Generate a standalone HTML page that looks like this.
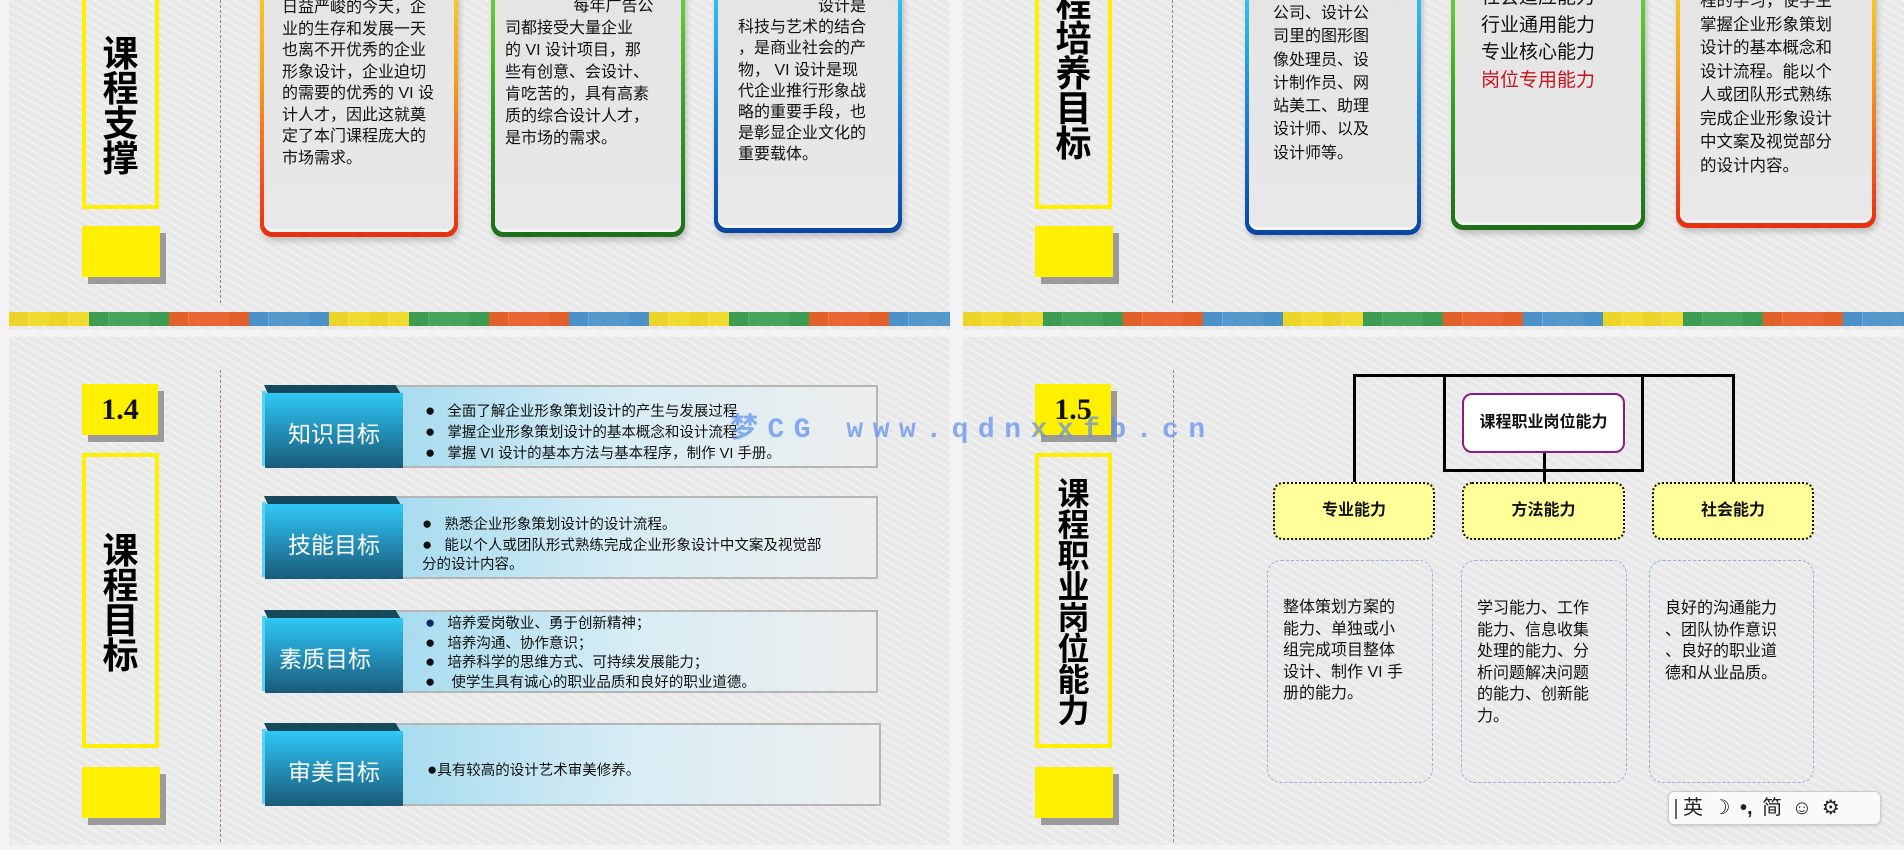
<!DOCTYPE html>
<html><head><meta charset="utf-8">
<style>
*{margin:0;padding:0;box-sizing:border-box}
body{width:1904px;height:850px;background:#f3f3f5;position:relative;overflow:hidden;font-family:"Liberation Sans","Noto Sans CJK SC",sans-serif;color:#111}
.a{position:absolute}
.panel{position:absolute;overflow:hidden;background-color:#eaeaea;background-image:repeating-linear-gradient(30deg,#e8e8e8 0px,#e8e8e8 5px,#f1f1f1 5px,#f1f1f1 7px)}
.tbox{position:absolute;border:4px solid #fff000;width:77px}
.tt{position:absolute;left:0;width:100%;text-align:center;font-size:36px;line-height:35px;color:#000;font-weight:bold;font-family:"Liberation Sans","Noto Sans CJK SC",sans-serif}
.ysq{position:absolute;width:78px;height:51px;background:#fff000;box-shadow:6px 7px 0 #9a9a9a}
.dash{position:absolute;width:0;border-left:1px dashed #b07a90}
.strip{position:absolute;left:0;height:14px;width:960px;background:repeating-linear-gradient(90deg,#ecd428 0,#ecd428 19px,#f6e650 19px,#f6e650 20px,#f0dc30 20px,#f0dc30 40px,#ecd428 40px,#ecd428 59px,#f6e650 59px,#f6e650 60px,#f0dc30 60px,#f0dc30 80px,#3c9c52 80px,#3c9c52 99px,#52b068 99px,#52b068 100px,#44a45a 100px,#44a45a 140px,#3c9c52 140px,#3c9c52 160px,#e2602a 160px,#e2602a 179px,#f07a48 179px,#f07a48 180px,#e86634 180px,#e86634 220px,#e2602a 220px,#e2602a 240px,#4c92c8 240px,#4c92c8 259px,#6aaade 259px,#6aaade 260px,#5498cc 260px,#5498cc 300px,#4c92c8 300px,#4c92c8 320px)}
.card{position:absolute;border-radius:12px;padding:0 4px 5px 4px;box-shadow:2px 4px 6px rgba(0,0,0,.18)}
.card .in{width:100%;height:100%;background:linear-gradient(#e4e4e4,#e8e8e8);border-radius:9px;box-shadow:inset 0 -3px 0 #f4f4f4}
.txt{position:absolute;font-size:16px;line-height:21.5px;color:#111;white-space:nowrap}
.or{background:linear-gradient(#f8d820,#f3a020 40%,#ef5020 80%,#e63010)}
.gr{background:linear-gradient(#7ad838,#3aa028 50%,#1e6e1a)}
.bl{background:linear-gradient(#38d0f4,#1a80d0 55%,#0a46a4)}
.num{position:absolute;width:76px;height:51px;background:#fff000;box-shadow:6px 7px 0 #9a9a9a;font-family:"Liberation Serif",serif;font-weight:bold;font-size:30px;text-align:center;line-height:51px}
.row{position:absolute;left:262px;width:616px;height:83px}
.row .ct{position:absolute;left:130px;right:0;top:0;bottom:0;border:2px solid #b5b5b5;background:linear-gradient(90deg,#a6dbef,#d8edf4 50%,#eeeeee)}
.row .blk{position:absolute;left:0;top:0;width:141px;height:83px}
.row .blk .tp{position:absolute;left:2px;top:0;width:137px;height:9px;background:#144a5c;clip-path:polygon(0 0,96% 0,100% 100%,3% 100%)}
.row .blk .bd{position:absolute;left:3px;top:8px;width:138px;height:75px;background:linear-gradient(#30c8f6,#2496c0 45%,#1a5a78)}
.row .blk .sd{position:absolute;left:0;top:6px;width:4px;height:75px;background:#58d4f4}
.row .lb{position:absolute;left:3px;width:138px;text-align:center;color:#fff;font-size:23px;top:30px}
.row .li{position:absolute;font-size:14.5px;white-space:nowrap;color:#111}
.b{font-size:17px;line-height:1}
.ybox{position:absolute;top:482px;height:58px;background:#ffff99;border:2px dotted #111;border-radius:10px;text-align:center;line-height:54px;font-weight:bold;font-size:16px}
.dbox{position:absolute;top:560px;height:223px;border:1.5px dashed #8fb0e0;border-radius:14px}
.ln{position:absolute;background:#000}
</style></head><body>

<!-- TOP LEFT -->
<div class="panel" style="left:9px;top:0;width:941px;height:330px">
  <div class="tbox" style="left:73px;top:-10px;height:219px"><div class="tt" style="top:42px">课<br>程<br>支<br>撑</div></div>
  <div class="ysq" style="left:73px;top:226px"></div>
  <div class="dash" style="left:211px;top:0;height:303px"></div>
  <div class="strip" style="top:312px"></div>

  <div class="card or" style="left:251px;top:-30px;width:198px;height:267px"><div class="in"></div></div>
  <div class="txt" style="left:273px;top:-3px">日益严峻的今天，企<br>业的生存和发展一天<br>也离不开优秀的企业<br>形象设计，企业迫切<br>的需要的优秀的 VI 设<br>计人才，因此这就奠<br>定了本门课程庞大的<br>市场需求。</div>

  <div class="card gr" style="left:482px;top:-30px;width:194px;height:267px"><div class="in"></div></div>
  <div class="txt" style="left:496px;top:-4px;line-height:22px">　　　　 每年广告公<br>司都接受大量企业<br>的 VI 设计项目，那<br>些有创意、会设计、<br>肯吃苦的，具有高素<br>质的综合设计人才，<br>是市场的需求。</div>

  <div class="card bl" style="left:705px;top:-30px;width:188px;height:263px"><div class="in"></div></div>
  <div class="txt" style="left:729px;top:-4px;line-height:21.2px">　　　　　设计是<br>科技与艺术的结合<br>，是商业社会的产<br>物， VI 设计是现<br>代企业推行形象战<br>略的重要手段，也<br>是彰显企业文化的<br>重要载体。</div>
</div>

<!-- TOP RIGHT -->
<div class="panel" style="left:963px;top:0;width:941px;height:330px">
  <div class="tbox" style="left:72px;top:-10px;height:219px"><div class="tt" style="top:-8px">程<br>培<br>养<br>目<br>标</div></div>
  <div class="ysq" style="left:72px;top:226px"></div>
  <div class="dash" style="left:209px;top:0;height:303px"></div>
  <div class="strip" style="top:312px"></div>

  <div class="card bl" style="left:282px;top:-30px;width:176px;height:265px"><div class="in"></div></div>
  <div class="txt" style="left:310px;top:2px;line-height:23.3px">公司、设计公<br>司里的图形图<br>像处理员、设<br>计制作员、网<br>站美工、助理<br>设计师、以及<br>设计师等。</div>

  <div class="card gr" style="left:488px;top:-30px;width:194px;height:260px"><div class="in"></div></div>
  <div class="txt" style="left:518px;top:-16px;font-size:19px;line-height:27.5px">社会适应能力<br>行业通用能力<br>专业核心能力<br><span style="color:#c8141e">岗位专用能力</span></div>

  <div class="card or" style="left:713px;top:-30px;width:200px;height:258px"><div class="in"></div></div>
  <div class="txt" style="left:737px;top:-10px;font-size:16.5px;line-height:23.5px">程的学习，使学生<br>掌握企业形象策划<br>设计的基本概念和<br>设计流程。能以个<br>人或团队形式熟练<br>完成企业形象设计<br>中文案及视觉部分<br>的设计内容。</div>
</div>

<!-- BOTTOM LEFT -->
<div class="panel" style="left:9px;top:337px;width:941px;height:508px"></div>
<div class="num" style="left:82px;top:384px">1.4</div>
<div class="tbox" style="left:82px;top:453px;height:295px"><div class="tt" style="top:76px">课<br>程<br>目<br>标</div></div>
<div class="ysq" style="left:82px;top:767px"></div>
<div class="dash" style="left:220px;top:370px;height:472px"></div>

<div class="row" style="top:385px">
  <div class="ct"></div>
  <div class="blk"><div class="tp"></div><div class="sd"></div><div class="bd"></div><div class="lb">知识目标</div></div>
  <div class="li" style="left:163px;top:15px"><span class="b">●</span>&nbsp;&nbsp; 全面了解企业形象策划设计的产生与发展过程<br><span class="b">●</span>&nbsp;&nbsp; 掌握企业形象策划设计的基本概念和设计流程<br><span class="b">●</span>&nbsp;&nbsp; 掌握 VI 设计的基本方法与基本程序，制作 VI 手册。</div>
</div>
<div class="row" style="top:496px">
  <div class="ct"></div>
  <div class="blk"><div class="tp"></div><div class="sd"></div><div class="bd"></div><div class="lb">技能目标</div></div>
  <div class="li" style="left:160px;top:19px;line-height:19.5px"><span class="b">●</span>&nbsp;&nbsp; 熟悉企业形象策划设计的设计流程。<br><span class="b">●</span>&nbsp;&nbsp; 能以个人或团队形式熟练完成企业形象设计中文案及视觉部<br>分的设计内容。</div>
</div>
<div class="row" style="top:610px">
  <div class="ct"></div>
  <div class="blk"><div class="tp"></div><div class="sd"></div><div class="bd"></div><div class="lb" style="left:-6px">素质目标</div></div>
  <div class="li" style="left:163px;top:4px;line-height:18.5px"><span class="b" style="color:#0a2a6a">●</span>&nbsp;&nbsp; 培养爱岗敬业、勇于创新精神；<br><span class="b">●</span>&nbsp;&nbsp; 培养沟通、协作意识；<br><span class="b">●</span>&nbsp;&nbsp; 培养科学的思维方式、可持续发展能力；<br><span class="b">●</span>&nbsp;&nbsp;&nbsp; 使学生具有诚心的职业品质和良好的职业道德。</div>
</div>
<div class="row" style="top:723px;width:619px">
  <div class="ct"></div>
  <div class="blk"><div class="tp"></div><div class="sd"></div><div class="bd"></div><div class="lb">审美目标</div></div>
  <div class="li" style="left:165px;top:36px"><span class="b">●</span>具有较高的设计艺术审美修养。</div>
</div>

<!-- BOTTOM RIGHT -->
<div class="panel" style="left:963px;top:337px;width:941px;height:508px"></div>
<div class="num" style="left:1035px;top:384px">1.5</div>
<div class="tbox" style="left:1035px;top:453px;height:295px"><div class="tt" style="top:22px;font-size:32px;line-height:31px">课<br>程<br>职<br>业<br>岗<br>位<br>能<br>力</div></div>
<div class="ysq" style="left:1035px;top:767px"></div>
<div class="dash" style="left:1173px;top:370px;height:472px"></div>

<div class="ln" style="left:1353px;top:374px;width:382px;height:3px"></div>
<div class="ln" style="left:1353px;top:374px;width:3px;height:108px"></div>
<div class="ln" style="left:1732px;top:374px;width:3px;height:108px"></div>
<div class="ln" style="left:1443px;top:374px;width:3px;height:98px"></div>
<div class="ln" style="left:1641px;top:374px;width:3px;height:98px"></div>
<div class="ln" style="left:1443px;top:469px;width:201px;height:3px"></div>
<div class="ln" style="left:1543px;top:452px;width:3px;height:30px"></div>
<div class="a" style="left:1462px;top:393px;width:163px;height:60px;background:#fff;border:2px solid #8a1a8a;border-radius:10px;text-align:center;line-height:56px;font-weight:bold;font-size:16px">课程职业岗位能力</div>

<div class="ybox" style="left:1273px;width:162px">专业能力</div>
<div class="ybox" style="left:1462px;width:163px">方法能力</div>
<div class="ybox" style="left:1652px;width:162px">社会能力</div>

<div class="dbox" style="left:1267px;width:166px"></div>
<div class="dbox" style="left:1461px;width:166px"></div>
<div class="dbox" style="left:1649px;width:165px"></div>
<div class="txt" style="left:1283px;top:597px">整体策划方案的<br>能力、单独或小<br>组完成项目整体<br>设计、制作 VI 手<br>册的能力。</div>
<div class="txt" style="left:1477px;top:598px">学习能力、工作<br>能力、信息收集<br>处理的能力、分<br>析问题解决问题<br>的能力、创新能<br>力。</div>
<div class="txt" style="left:1665px;top:598px">良好的沟通能力<br>、团队协作意识<br>、良好的职业道<br>德和从业品质。</div>

<!-- watermark -->
<div class="a" style="left:730px;top:406px;font-family:'Liberation Mono','Noto Sans CJK SC',monospace;font-size:28px;font-weight:bold;letter-spacing:9.5px;color:rgba(90,140,240,.7);white-space:nowrap">梦CG www.qdnxxfb.cn</div>

<!-- IME bar -->
<div class="a" style="left:1668px;top:791px;width:213px;height:34px;background:#fafafa;border:1px solid #ccc;border-radius:6px;box-shadow:0 1px 3px rgba(0,0,0,.15);font-size:20px;line-height:32px;color:#222;white-space:nowrap;padding-left:6px;word-spacing:4px">
<span style="display:inline-block;width:2px;height:20px;background:#666;vertical-align:middle;margin-right:6px"></span>英 ☽ <b>•,</b> 简 ☺ ⚙</div>
</body></html>
